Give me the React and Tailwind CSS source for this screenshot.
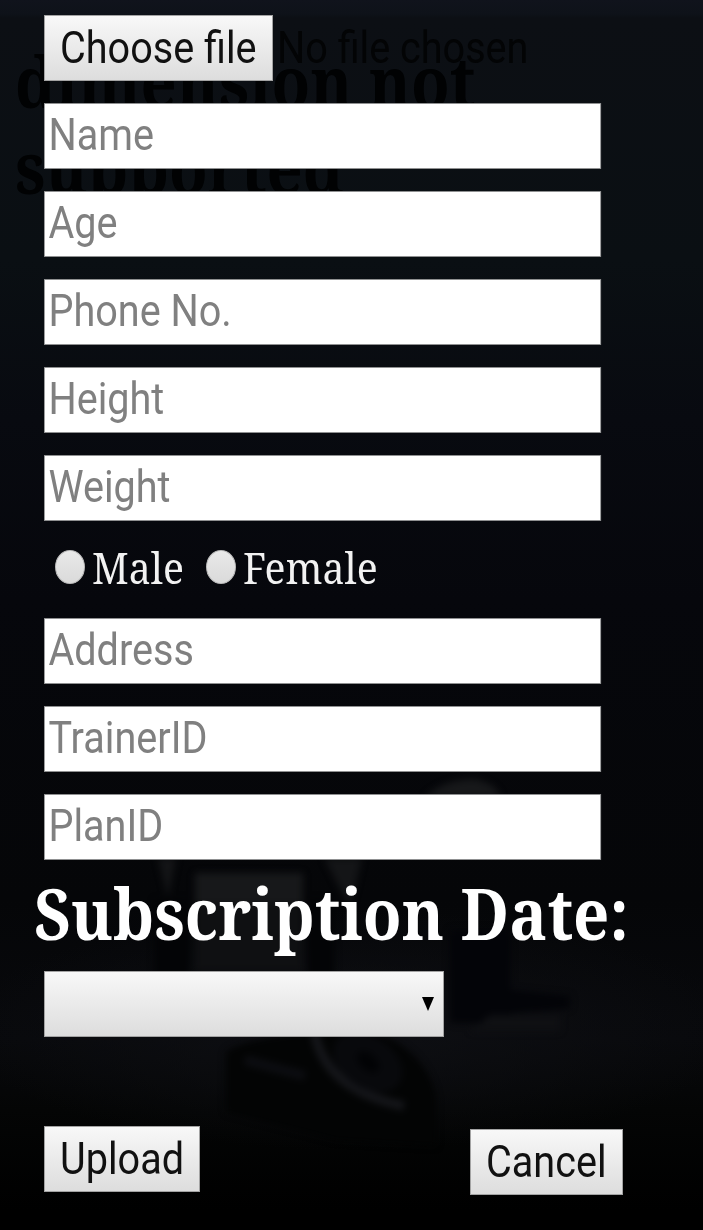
import React from "react";

const SERIF = "font-['Noto_Serif','DejaVu_Serif',serif]";

function Field({ label }) {
  return (
    <div className="h-[66px] w-[557px]">
      <input
        type="text"
        placeholder={label}
        aria-label={label}
        className="block h-[66px] w-[633px] origin-left scale-x-[0.88] rounded-none border border-[#8f9091] bg-white pl-[4px] pb-[3px] text-[45px] text-black placeholder:text-[#808080] placeholder:opacity-100"
      />
    </div>
  );
}

function PushButton({ children, className }) {
  return (
    <button
      type="button"
      className={`flex h-[66px] items-center border border-[#a3a3a3] bg-linear-to-b from-[#f8f8f8] to-[#dddddd] pl-[15px] text-left text-[45px] leading-none text-[#111] ${className}`}
    >
      <span className="inline-block origin-left scale-x-[0.88] whitespace-nowrap pb-[2px]">{children}</span>
    </button>
  );
}

function Radio({ label, className }) {
  return (
    <label className={`flex items-center ${className}`}>
      <input
        type="radio"
        name="gender"
        className="h-[34px] w-[30px] shrink-0 appearance-none rounded-[50%] border border-[#bbb] bg-linear-to-b from-[#e9e9e9] to-[#dadada]"
      />
      <span className={`ml-[7px] inline-block origin-left scale-x-[0.89] whitespace-nowrap text-[44px] leading-none text-[#f2f2f2] ${SERIF}`}>
        {label}
      </span>
    </label>
  );
}

function Backdrop() {
  return (
    <svg className="absolute inset-0 h-full w-full" viewBox="0 0 703 1230" aria-hidden="true">
      <defs>
        <filter id="soft" x="-20%" y="-20%" width="140%" height="140%" colorInterpolationFilters="sRGB">
          <feGaussianBlur stdDeviation="3.5" />
        </filter>
        <radialGradient id="floor">
          <stop offset="0" stopColor="#0e0f13" />
          <stop offset="1" stopColor="#0e0f13" stopOpacity="0" />
        </radialGradient>
      </defs>
      <ellipse cx="350" cy="1030" rx="390" ry="120" fill="url(#floor)" />
      <g filter="url(#soft)">
        <path d="M425 797q20-18 50-18q20 4 26 18z" fill="#17181a" />
        <path d="M195 873h108v30H195z" fill="#17181a" />
        <path d="M195 903h108v68H195z" fill="#0f1012" />
        <path d="M158 858h18l-8 40zM324 858h38l-12 50z" fill="#141517" />
        <path d="M155 900h34v130h-34zM308 900h26v130h-26z" fill="#030406" />
        <path d="M450 930h60v60l60 6v12l-60 5v10H450z" fill="#030408" />
        <path d="M490 1015h70v16h-90z" fill="#0f1013" />
        <path d="M226 1052q20-14 90-20h60q50 20 60 64v50l-100-6l-110-28z" fill="#030404" />
        <path d="M245 1060l60 16" stroke="#0c0d11" strokeWidth="10" />
        <path d="M314 1030q10 60 90 76" fill="none" stroke="#15161a" strokeWidth="9" />
        <ellipse cx="368" cy="1062" rx="38" ry="26" transform="rotate(35 368 1062)" fill="#08090c" />
        <ellipse cx="368" cy="1062" rx="13" ry="8" transform="rotate(42 368 1062)" fill="#020305" />
      </g>
    </svg>
  );
}

export default function App() {
  return (
    <main className="relative h-[1230px] w-[703px] overflow-hidden bg-[linear-gradient(to_bottom,#10131c_0,#0e1219_14px,#0c0f14_18px,#0a0f13_260px,#080a10_420px,#06070c_600px,#050608_900px,#08090c_1040px,#040505_1110px,#000_1210px)] font-[Roboto,sans-serif]">
      <Backdrop />
      <h1 className={`absolute left-[15px] top-[38px] origin-left scale-x-[0.89] whitespace-nowrap text-[71px] font-bold leading-[86px] text-[#010203] ${SERIF}`}>
        dimension not
        <br />
        supported
      </h1>
      <form className="relative flex flex-col pl-[44px] pt-[15px]">
        <div className="flex h-[66px] items-center">
          <PushButton className="w-[229px]">Choose file</PushButton>
          <span className="ml-[4px] inline-block origin-left scale-x-[0.88] whitespace-nowrap pb-[2px] text-[45px] leading-none text-[#030405]">
            No file chosen
          </span>
        </div>
        <div className="mt-[22px] flex flex-col gap-[22px]">
          <Field label="Name" />
          <Field label="Age" />
          <Field label="Phone No." />
          <Field label="Height" />
          <Field label="Weight" />
        </div>
        <div className="flex h-[97px] items-center pb-[6px] pl-[11px]">
          <Radio label="Male" className="w-[151px]" />
          <Radio label="Female" />
        </div>
        <div className="flex flex-col gap-[22px]">
          <Field label="Address" />
          <Field label="TrainerID" />
          <Field label="PlanID" />
        </div>
        <h2 className={`-ml-[10px] h-[111px] w-[600px] origin-left scale-x-[0.894] whitespace-nowrap text-[71px] font-bold leading-[105px] text-white ${SERIF}`}>
          Subscription Date:
        </h2>
        <button
          type="button"
          aria-label="Subscription date"
          className="flex h-[66px] w-[400px] items-center justify-end border border-[#a3a3a3] bg-linear-to-b from-[#f8f8f8] to-[#dddddd] pr-[9px]"
        >
          <svg className="h-[14px] w-[12px]" viewBox="0 0 12 14">
            <path d="M0 0h12L6 14z" fill="#000" />
          </svg>
        </button>
        <div className="mt-[89px] flex w-[579px] items-start justify-between">
          <PushButton className="w-[156px]">Upload</PushButton>
          <PushButton className="mt-[3px] w-[153px]">Cancel</PushButton>
        </div>
      </form>
    </main>
  );
}
